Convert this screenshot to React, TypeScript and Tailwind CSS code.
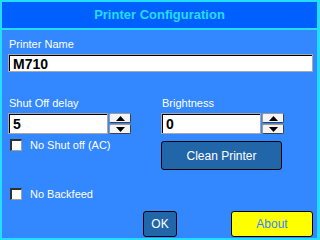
import React from "react";

function Field({ value, className }: { value: string; className?: string }) {
  return (
    <div className={`border border-[#a8a8a8] ${className ?? ""}`}>
      <div className="h-full bg-white border-t border-l border-black flex items-center pl-[3px] text-[14px] font-bold text-black leading-none">
        {value}
      </div>
    </div>
  );
}

function SpinButton({ up }: { up?: boolean }) {
  return (
    <div className="flex-1 bg-[#f4f4f4] border border-[#9a9a9a] border-b-[#404040] border-r-[#404040] rounded-[2px] flex items-center justify-center">
      <svg width="9" height="5" viewBox="0 0 9 5">
        {up ? <path d="M0 5L4.5 0L9 5Z" fill="#000" /> : <path d="M0 0L4.5 5L9 0Z" fill="#000" />}
      </svg>
    </div>
  );
}

function Spin({ value }: { value: string }) {
  return (
    <div className="flex h-[21px]">
      <Field value={value} className="w-[100px] h-full" />
      <div className="w-[22px] ml-[1px] flex flex-col gap-[1px]">
        <SpinButton up />
        <SpinButton />
      </div>
    </div>
  );
}

function Check({ label }: { label: string }) {
  return (
    <div className="flex items-center h-[12px] pl-[2px]">
      <div className="w-[12px] h-[12px] bg-white border-t-2 border-l-2 border-[#303030] border-b border-r border-b-[#a0a0a0] border-r-[#a0a0a0]" />
      <span className="ml-[8px] text-white text-[11px] leading-none">{label}</span>
    </div>
  );
}

export default function App() {
  return (
    <div
      className="w-[320px] h-[240px] bg-[#22ddff] pt-[2px] pl-[2px] pr-[3px] pb-[2px] flex flex-col select-none"
      style={{ fontFamily: '"Liberation Sans", Arial, sans-serif' }}
    >
      <div className="h-[26px] bg-[#0060ff] flex items-center justify-center text-[#22ddff] text-[13px] font-bold">
        Printer Configuration
      </div>
      <div className="mt-[2px] flex-1 bg-[#3388ff] flex flex-col pl-[6px] pr-[4px]">
        <div className="mt-[7px] text-white text-[11px] leading-[14px] pl-[1px]">Printer Name</div>
        <Field value="M710" className="mt-[3px] h-[18px]" />

        <div className="mt-[24px] grid grid-cols-[153px_1fr]">
          <div className="flex flex-col">
            <div className="text-white text-[11px] leading-[14px] pl-[1px]">Shut Off delay</div>
            <div className="mt-[3px]">
              <Spin value="5" />
            </div>
            <div className="mt-[5px]">
              <Check label="No Shut off (AC)" />
            </div>
            <div className="mt-[37px]">
              <Check label="No Backfeed" />
            </div>
          </div>
          <div className="flex flex-col">
            <div className="text-white text-[11px] leading-[14px] pl-[1px]">Brightness</div>
            <div className="mt-[3px]">
              <Spin value="0" />
            </div>
            <button className="mt-[7px] w-[121px] h-[29px] bg-[#2266aa] border border-black rounded-[3px] text-white text-[12px]">
              Clean Printer
            </button>
          </div>
        </div>

        <div className="mt-auto mb-[1px] flex">
          <button className="ml-[135px] w-[34px] h-[26px] bg-[#2266aa] border border-black rounded-[3px] text-white text-[12px]">
            OK
          </button>
          <button className="ml-[54px] w-[82px] h-[26px] bg-[#ffff00] border border-black rounded-[3px] text-[#3388ff] text-[12px]">
            About
          </button>
        </div>
      </div>
    </div>
  );
}
